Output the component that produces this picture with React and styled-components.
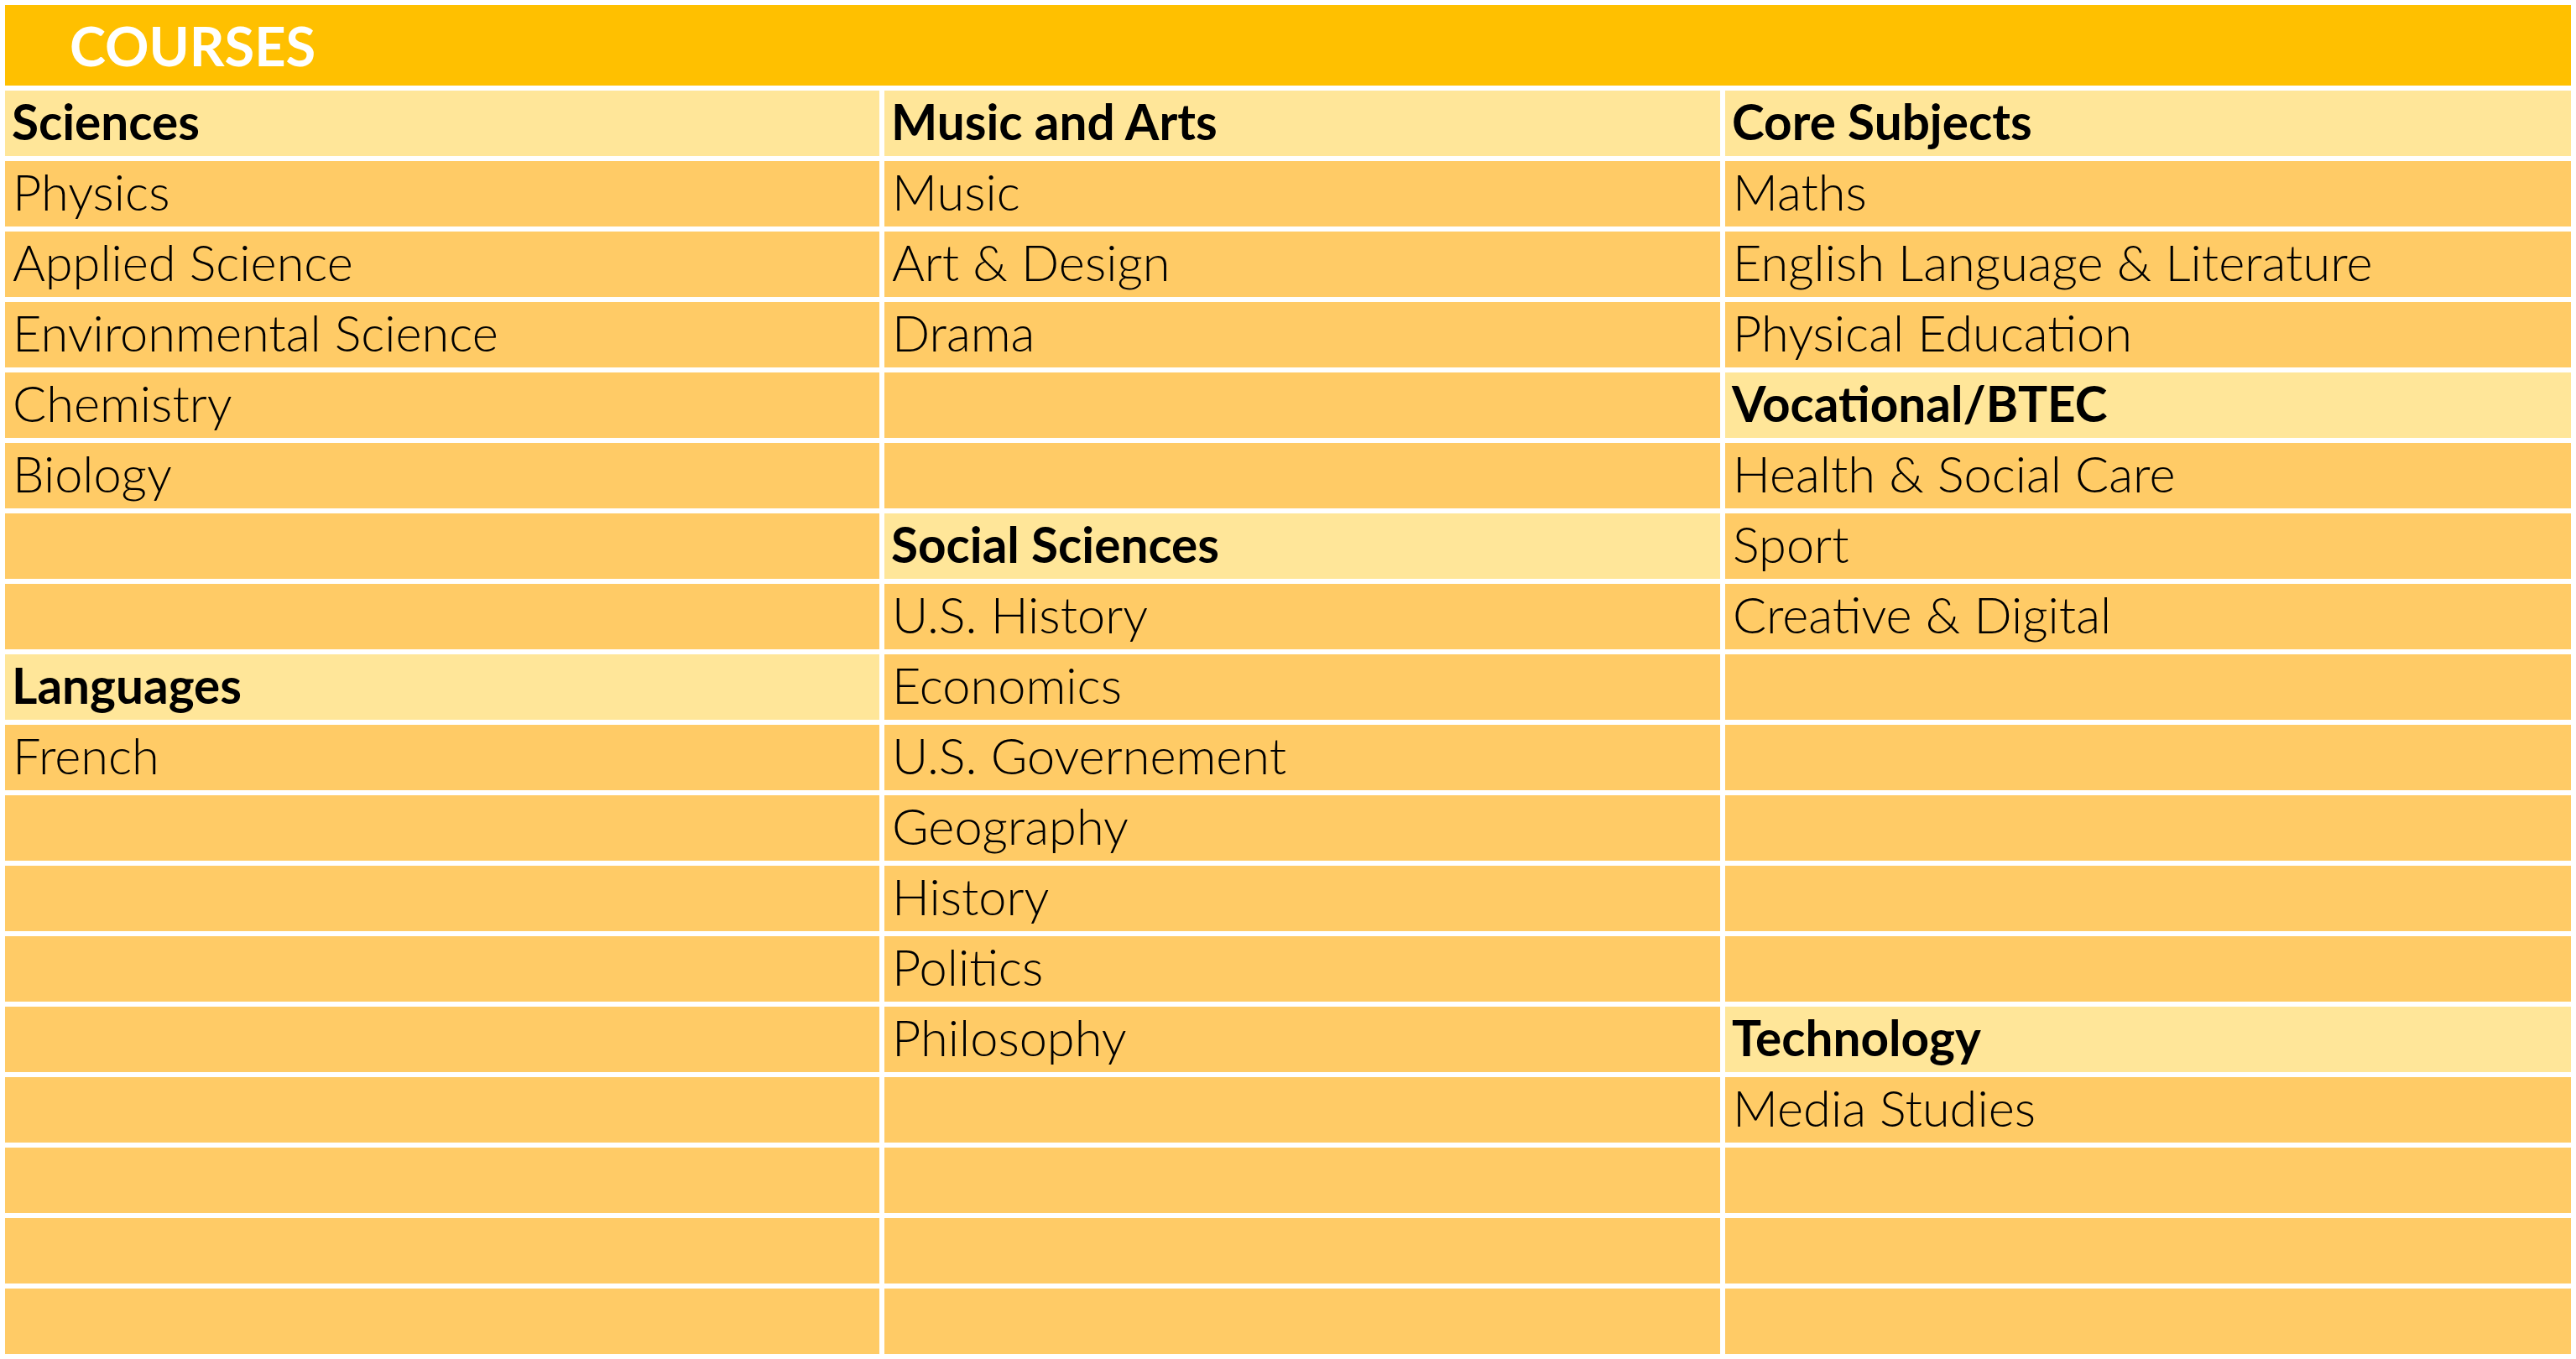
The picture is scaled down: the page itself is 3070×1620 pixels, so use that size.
import React from 'react';
import styled, { createGlobalStyle } from 'styled-components';

const GlobalStyle = createGlobalStyle`
  html, body {
    margin: 0;
    padding: 0;
    background: #ffffff;
  }
  body {
    font-family: 'Lato', 'Open Sans', 'Liberation Sans', sans-serif;
  }
`;

const Sheet = styled.div`
  width: 3070px;
  height: 1620px;
  padding: 6px 6px 0 6px;
  box-sizing: border-box;

  /* Flex Parent */
  display: flex;
  flex-direction: column;
  gap: 6px;
`;

const Banner = styled.div`
  height: 96px;
  background: #ffc000;
  color: #ffffff;
  font-weight: 700;
  font-size: 65px;
  line-height: 78px;
  padding-left: 77px;

  display: flex;
  align-items: center;
`;

const Columns = styled.div`
  display: grid;
  grid-template-columns: 1042px 996px 1008px;
  gap: 6px;
`;

const Column = styled.div`
  display: flex;
  flex-direction: column;
  gap: 6px;
`;

const Cell = styled.div`
  height: 78px;
  box-sizing: border-box;
  padding: ${({ $heading }) => ($heading ? '2px 0 0 8px' : '2px 0 0 9px')};
  background: ${({ $heading }) => ($heading ? '#ffe699' : '#ffcb66')};
  color: #000000;
  font-size: ${({ $heading }) => ($heading ? '58.5px' : '59.5px')};
  font-weight: ${({ $heading }) => ($heading ? 700 : 300)};
  line-height: 68px;
  white-space: nowrap;
`;

// '#' marks a heading cell
const columns = [
  ['#Sciences', 'Physics', 'Applied Science', 'Environmental Science', 'Chemistry', 'Biology', '', '',
    '#Languages', 'French', '', '', '', '', '', '', '', ''],
  ['#Music and Arts', 'Music', 'Art & Design', 'Drama', '', '', '#Social Sciences', 'U.S. History',
    'Economics', 'U.S. Governement', 'Geography', 'History', 'Politics', 'Philosophy', '', '', '', ''],
  ['#Core Subjects', 'Maths', 'English Language & Literature', 'Physical Education', '#Vocational/BTEC',
    'Health & Social Care', 'Sport', 'Creative & Digital', '', '', '', '', '', '#Technology', 'Media Studies',
    '', '', ''],
];

const App = () => {
  return (
    <>
      <GlobalStyle />
      <Sheet>
        <Banner>COURSES</Banner>
        <Columns>
          {columns.map((cells, c) => (
            <Column key={c}>
              {cells.map((text, r) => {
                const heading = text.startsWith('#');
                return (
                  <Cell key={r} $heading={heading}>
                    {heading ? text.slice(1) : text}
                  </Cell>
                );
              })}
            </Column>
          ))}
        </Columns>
      </Sheet>
    </>
  );
};

export default App;
